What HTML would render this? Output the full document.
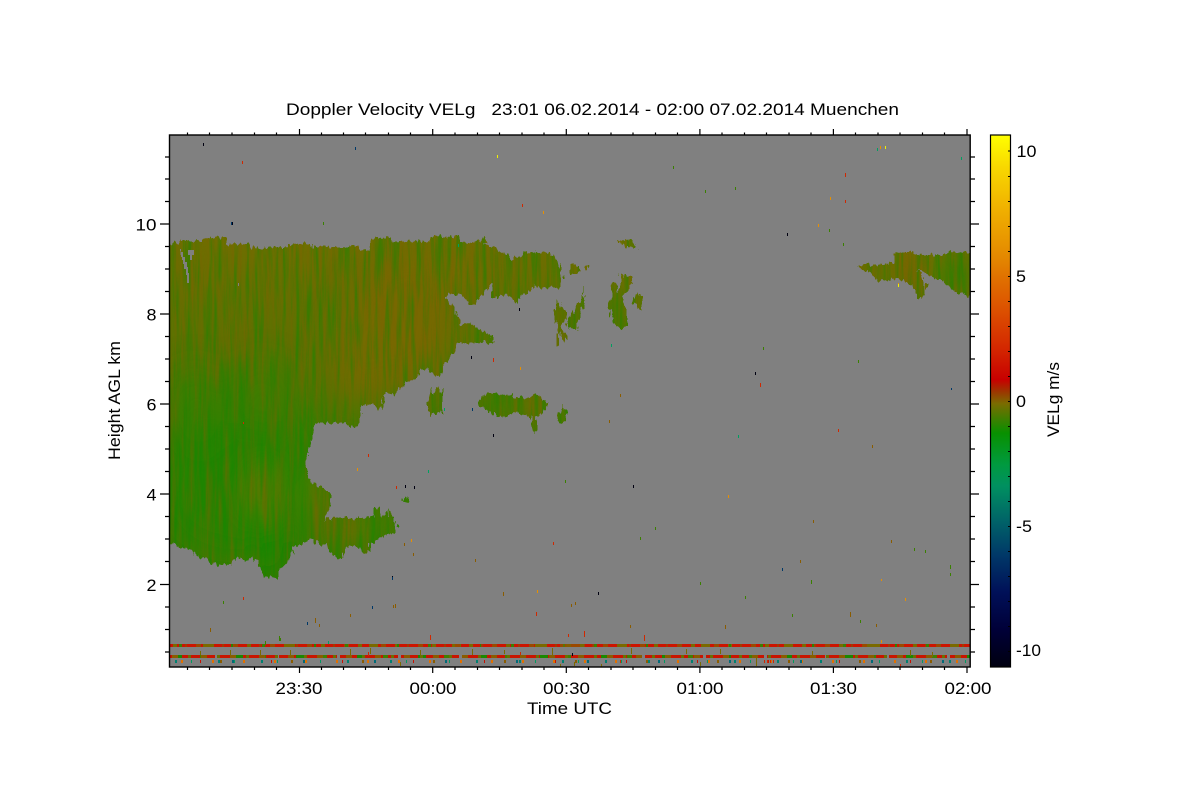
<!DOCTYPE html>
<html><head><meta charset="utf-8"><title>Doppler Velocity</title>
<style>
html,body{margin:0;padding:0;background:#fff;width:1200px;height:800px;overflow:hidden}
svg{display:block}
text{font-family:"Liberation Sans",sans-serif;font-size:17px;fill:#000}
</style></head><body>
<svg width="1200" height="800" viewBox="0 0 1200 800" xmlns="http://www.w3.org/2000/svg">
<defs>
<linearGradient id="base" x1="0" y1="236" x2="0" y2="580" gradientUnits="userSpaceOnUse">
<stop offset="0" stop-color="#706e00"/><stop offset=".2" stop-color="#637000"/><stop offset=".45" stop-color="#557400"/><stop offset=".7" stop-color="#3a7c00"/><stop offset="1" stop-color="#387c00"/>
</linearGradient>
<linearGradient id="cb" x1="0" y1="135" x2="0" y2="667" gradientUnits="userSpaceOnUse">
<stop offset="0" stop-color="#ffff00"/><stop offset=".06" stop-color="#f8d800"/><stop offset=".14" stop-color="#f0b000"/><stop offset=".23" stop-color="#e48800"/><stop offset=".27" stop-color="#e07000"/><stop offset=".33" stop-color="#dc5000"/><stop offset=".4" stop-color="#d42800"/><stop offset=".46" stop-color="#c80000"/><stop offset=".48" stop-color="#a03000"/><stop offset=".505" stop-color="#7a6c00"/><stop offset=".56" stop-color="#089000"/><stop offset=".62" stop-color="#009a40"/><stop offset=".66" stop-color="#009060"/><stop offset=".73" stop-color="#006068"/><stop offset=".79" stop-color="#003868"/><stop offset=".86" stop-color="#001058"/><stop offset=".93" stop-color="#000038"/><stop offset="1" stop-color="#000010"/>
</linearGradient>
<clipPath id="plot"><rect x="170" y="135" width="800" height="532"/></clipPath>
<filter id="jag" filterUnits="userSpaceOnUse" x="150" y="220" width="840" height="380" color-interpolation-filters="sRGB">
<feTurbulence type="fractalNoise" baseFrequency="0.3 0.09" numOctaves="2" seed="7" result="n"/>
<feDisplacementMap in="SourceGraphic" in2="n" scale="9" xChannelSelector="G" yChannelSelector="R" result="d"/>
<feComponentTransfer in="d"><feFuncA type="discrete" tableValues="0 1"/></feComponentTransfer>
</filter>
<mask id="clouds" maskUnits="userSpaceOnUse" x="150" y="220" width="840" height="380">
<g filter="url(#jag)" fill="#fff">
<polygon points="150,244 180,243 180,241 203,241 203,238 225,238 226,244 250,244 250,247 287,247 287,244 313,244 313,247 347,247 354,245 360,250 368,250 372,238 390,238 392,243 393,241 420,241 420,242 429,241 429,236 458,236 458,241 470,243 473,241 489,245 489,247 500,250 510,258 520,257 525,252 535,252 535,253 550,253 552,256 558,262 560,272 563,277 560,288 552,287 540,288 534,284 530,293 520,297 517,305 513,300 508,293 500,297 493,298 492,283 483,293 477,302 470,305 463,295 453,293 445,295 445,297 455,307 458,317 463,325 470,324 477,328 483,332 492,335 493,343 470,343 457,343 453,353 447,360 440,377 432,372 423,368 415,380 405,383 393,395 385,393 382,410 375,406 362,405 360,420 357,427 340,423 327,423 317,423 313,437 308,450 305,467 310,480 323,488 330,495 330,507 323,520 333,518 357,518 367,517 380,518 387,515 387,508 393,515 397,525 393,533 383,535 377,542 370,543 368,553 365,553 360,548 353,548 347,545 340,560 332,555 327,543 322,545 317,544 313,538 300,545 293,547 292,555 287,563 280,570 277,578 265,577 257,563 252,557 247,562 237,557 232,565 218,565 207,560 193,553 180,546 150,535"/>
<polygon points="477,403 483,395 495,393 512,394 513,398 527,398 537,394 542,400 548,403 545,410 537,417 537,428 535,433 532,428 530,417 517,413 500,417 490,412"/>
<polygon points="426,402 430,397 431,387 433,395 437,385 440,393 444,387 444,393 442,397 442,413 433,412 430,415 427,408"/>
<polygon points="557,417 562,410 563,402 564,410 568,408 568,413 565,422 559,423"/>
<polygon points="555,313 557,298 559,307 566,308 565,320 560,327 566,333 566,341 562,338 557,328"/>
<polygon points="567,323 570,313 578,307 583,295 584,285 585,297 583,307 578,320 577,329 568,329"/>
<polygon points="611,282 617,285 618,297 622,273 632,277 630,288 623,297 628,315 627,328 620,328 612,322 610,310 607,308 612,295"/>
<polygon points="633,298 635,293 642,295 642,308 638,310 637,305 633,303"/>
<polygon points="617,238 622,240 628,239 633,243 637,248 627,248 620,242"/>
<polygon points="569,268 573,265 579,267 579,273 570,273"/>
<polygon points="583,268 585,265 590,265 588,270 583,271"/>
<polygon points="857,265 868,265 880,265 893,263 893,253 912,252 918,255 925,255 942,255 952,252 985,252 985,298 963,295 955,293 950,288 945,282 933,277 923,272 918,270 922,277 926,280 926,295 920,299 915,290 909,283 895,278 885,280 878,280 868,270 860,270"/>
<polygon points="480,237 487,238 488,243 480,243"/>
<polygon points="557,333 559,333 559,346 557,346"/>
<polygon points="374,508 381,508 381,520 374,520"/>
<polygon points="403,497 408,497 408,502 403,502"/>
</g>
</mask>
<filter id="blur" x="-30%" y="-30%" width="160%" height="160%"><feGaussianBlur stdDeviation="14"/></filter>
<filter id="brown" x="0" y="0" width="100%" height="100%" color-interpolation-filters="sRGB">
<feTurbulence type="fractalNoise" baseFrequency="0.2 0.013" numOctaves="3" seed="4"/>
<feColorMatrix type="matrix" values="0 0 0 0 .49  0 0 0 0 .39  0 0 0 0 0  2.6 0 0 0 -1.05"/>
</filter>
<filter id="green" x="0" y="0" width="100%" height="100%" color-interpolation-filters="sRGB">
<feTurbulence type="fractalNoise" baseFrequency="0.24 0.014" numOctaves="3" seed="11"/>
<feColorMatrix type="matrix" values="0 0 0 0 .07  0 0 0 0 .53  0 0 0 0 0  2.6 0 0 0 -1.05"/>
</filter>
<pattern id="p1a" width="37" height="3" patternUnits="userSpaceOnUse" x="170" y="644"><rect x="3" width="4" height="3" fill="#7a6a00"/><rect x="15" width="2" height="3" fill="#a03c00"/><rect x="26" width="5" height="3" fill="#9a4a00"/></pattern>
<pattern id="p1b" width="83" height="3" patternUnits="userSpaceOnUse" x="170" y="644"><rect x="9" width="3" height="3" fill="#3c8000"/><rect x="33" width="9" height="3" fill="#7a6a00"/><rect x="61" width="2" height="3" fill="#2c8400"/></pattern>
<pattern id="p2a" width="61" height="3" patternUnits="userSpaceOnUse" x="170" y="655"><rect x="4" width="8" height="3" fill="#1a8800"/><rect x="30" width="5" height="3" fill="#408000"/><rect x="45" width="3" height="3" fill="#808080"/></pattern>
<pattern id="p2b" width="29" height="3" patternUnits="userSpaceOnUse" x="170" y="655"><rect x="2" width="6" height="3" fill="#8a5c00"/><rect x="18" width="3" height="3" fill="#6a7000"/></pattern>
<pattern id="p3a" width="43" height="3" patternUnits="userSpaceOnUse" x="170" y="660"><rect x="5" width="2" height="3" fill="#008070"/><rect x="21" width="1" height="3" fill="#009a60"/></pattern>
<pattern id="p3b" width="31" height="3" patternUnits="userSpaceOnUse" x="170" y="660"><rect x="11" width="2" height="3" fill="#e07000"/></pattern>
<pattern id="p3c" width="71" height="3" patternUnits="userSpaceOnUse" x="170" y="660"><rect x="30" width="1" height="3" fill="#c81000"/><rect x="50" width="2" height="3" fill="#8a5c00"/><rect x="62" width="2" height="3" fill="#006a78"/></pattern>
</defs>

<rect x="169.5" y="135" width="801" height="532" fill="#808080"/>

<g clip-path="url(#plot)">
<g mask="url(#clouds)">
<rect x="150" y="225" width="840" height="370" fill="url(#base)"/>
<g filter="url(#blur)">
<ellipse cx="400" cy="320" rx="50" ry="70" fill="#786800"/>
<ellipse cx="360" cy="350" rx="28" ry="50" fill="#746a00"/>
<ellipse cx="450" cy="270" rx="40" ry="22" fill="#746a00"/>
<ellipse cx="235" cy="485" rx="72" ry="65" fill="#1e8600" opacity=".85"/>
<ellipse cx="195" cy="410" rx="35" ry="45" fill="#2c8200" opacity=".7"/>
<ellipse cx="262" cy="395" rx="32" ry="35" fill="#348000" opacity=".75"/>
<ellipse cx="300" cy="445" rx="20" ry="36" fill="#2a8200"/>
<ellipse cx="262" cy="490" rx="9" ry="26" fill="#7a6600"/>
<ellipse cx="268" cy="548" rx="14" ry="24" fill="#0e8a00"/>
<ellipse cx="325" cy="500" rx="14" ry="22" fill="#6a6e00"/>
<ellipse cx="345" cy="530" rx="20" ry="14" fill="#786800"/>
<ellipse cx="370" cy="532" rx="10" ry="9" fill="#1c8600"/>
<ellipse cx="375" cy="517" rx="10" ry="4" fill="#8a5c00"/>
<ellipse cx="493" cy="404" rx="14" ry="9" fill="#128800"/>
<ellipse cx="530" cy="405" rx="16" ry="12" fill="#6c6e00"/>
<ellipse cx="572" cy="318" rx="6" ry="10" fill="#1a8600"/>
<ellipse cx="955" cy="275" rx="14" ry="20" fill="#268200"/>
<ellipse cx="910" cy="272" rx="9" ry="18" fill="#8a5800"/>
<ellipse cx="870" cy="268" rx="10" ry="6" fill="#7a6600"/>
<ellipse cx="890" cy="272" rx="8" ry="7" fill="#4a7800"/>
</g>
<rect x="169" y="225" width="802" height="370" filter="url(#brown)" opacity=".5"/>
<rect x="169" y="225" width="802" height="370" filter="url(#green)" opacity=".5"/>
</g>
</g>

<!-- small holes in the anvil -->
<path fill="#808080" shape-rendering="crispEdges" d="M180 249h1v3h2v5h2v5h2v5h1v6h1v10h-2v-8h-1v-6h-2v-5h-1v-4h-1v-3h-1zM188 250h6v5h-2v5h-2v-5h-2zM238 283h1v3h-1z"/>

<!-- near-ground bands -->
<g shape-rendering="crispEdges">
<rect x="170" y="644" width="800" height="3" fill="#cc1400"/>
<rect x="170" y="644" width="800" height="3" fill="url(#p1a)"/>
<rect x="170" y="644" width="800" height="3" fill="url(#p1b)"/>
<rect x="400" y="644" width="300" height="3" fill="url(#p1a)"/>
<rect x="560" y="644" width="25" height="3" fill="#7a6c00" opacity=".6"/>
<rect x="170" y="655" width="800" height="3" fill="#c81400"/>
<rect x="170" y="655" width="800" height="3" fill="url(#p2a)"/>
<rect x="170" y="655" width="800" height="3" fill="url(#p2b)"/>
<rect x="170" y="660" width="800" height="3" fill="url(#p3a)"/>
<rect x="170" y="660" width="800" height="3" fill="url(#p3b)"/>
<rect x="170" y="660" width="800" height="3" fill="url(#p3c)"/>
</g>

<!-- speckle -->
<g stroke-width="1" fill="none" shape-rendering="crispEdges">
<path stroke="#000010" d="M203.5 143v3M232.5 222v3M519.5 308v3M471.5 356v3M598.5 592v3M392.5 576v3M755.5 372v3M787.5 233v3M493.5 434v3M633.5 485v3M414.5 486v3M405.5 485v3M572.5 653v3"/>
<path stroke="#003868" d="M355.5 147v3M231.5 222v3M392.5 577v3M372.5 606v3M307.5 622v3M951.5 388v2M782.5 568v3M472.5 408v3"/>
<path stroke="#d02800" d="M242.5 161v3M493.5 358v4M845.5 173v4M845.5 200v3M760.5 383v4M396.5 486v3M243.5 422v2M243.5 597v3M368.5 454v3M838.5 429v3M522.5 204v3M584.5 631v6M644.5 635v6M568.5 634v3M553.5 542v3M536.5 612v4"/>
<path stroke="#e89000" d="M520.5 367v3M543.5 211v3M830.5 197v3M898.5 283v3M411.5 539v3M357.5 468v3M880.5 146v3M537.5 590v3M905.5 598v3M728.5 495v3M818.5 224v3M881.5 579v2M881.5 640v3"/>
<path stroke="#f0f000" d="M497.5 155v3M885.5 146v3M898.5 284v3"/>
<path stroke="#00a060" d="M961.5 157v3M877.5 148v3M428.5 470v3M611.5 344v3M738.5 435v3M444.5 408v3M458.5 244v3M328.5 641v3"/>
<path stroke="#3a8000" d="M705.5 190v3M735.5 187v3M673.5 166v3M323.5 222v3M223.5 601v3M829.5 229v3M843.5 243v3M858.5 360v3M763.5 347v3M565.5 480v3M655.5 527v3M640.5 537v3M745.5 596v3M700.5 582v3M811.5 580v4M792.5 614v3M860.5 620v3M925.5 550v3M914.5 548v3M950.5 565v4M950.5 573v3M279.5 636v5M280.5 638v3M265.5 641v4"/>
<path stroke="#8a5c00" d="M315.5 618v5M319.5 624v3M210.5 628v4M395.5 604v4M350.5 614v3M404.5 543v3M413.5 553v3M475.5 559v3M503.5 592v4M393.5 605v3M575.5 602v3M571.5 604v3M725.5 625v4M850.5 612v5M876.5 624v3M891.5 540v3M872.5 445v3M813.5 520v3M800.5 560v3M620.5 394v3M609.5 420v3M630.5 625v3"/>
<path stroke="#7a6a00" d="M350.5 649v6M370.5 648v6M472.5 649v6M504.5 650v4M552.5 648v8M631.5 648v6M686.5 649v5M720.5 649v5M812.5 651v4M910.5 650v6M756.5 658v8M420.5 650v5M290.5 650v6M260.5 650v6M230.5 650v5M200.5 651v4M932.5 652v5M400.5 662v4M601.5 664v3M560.5 664v3M574.5 662v4M700.5 662v4"/>
<path stroke="#d02800" d="M644.5 636v5M430.5 635v5M520.5 652v3M368.5 652v4M620.5 660v3M770.5 660v3M773.5 660v3M764.5 660v3M767.5 660v3M900.5 664v3"/>
</g>

<!-- frame -->
<rect x="169.5" y="135" width="800.7" height="532" fill="none" stroke="#000" stroke-width="1.4"/>
<g stroke="#000" stroke-width="1.2" fill="none">
<path d="M160 224H169M160 314H169M160 404H169M160 494H169M160 584.5H169M970 224H979M970 314H979M970 404H979M970 494H979M970 584.5H979"/>
<path d="M165 157H169M165 179H169M165 201.5H169M165 246.5H169M165 269H169M165 291.5H169M165 336.5H169M165 359H169M165 381.5H169M165 426.5H169M165 449H169M165 471.5H169M165 516.5H169M165 539H169M165 561.5H169M165 607H169M165 629.5H169M165 652H169"/>
<path d="M970 157H975M970 179H975M970 201.5H975M970 246.5H975M970 269H975M970 291.5H975M970 336.5H975M970 359H975M970 381.5H975M970 426.5H975M970 449H975M970 471.5H975M970 516.5H975M970 539H975M970 561.5H975M970 607H975M970 629.5H975M970 652H975"/>
<path d="M299.5 129V135M432.7 129V135M566.3 129V135M699.9 129V135M833.4 129V135M967 129V135M299.5 667V673M432.7 667V673M566.3 667V673M699.9 667V673M833.4 667V673M967 667V673"/>
<path d="M187.5 132.5V135M209.5 132.5V135M232 132.5V135M254.5 132.5V135M276.5 132.5V135M321.5 132.5V135M343.5 132.5V135M365.5 132.5V135M388.5 132.5V135M410.5 132.5V135M455 132.5V135M477.5 132.5V135M499.5 132.5V135M522 132.5V135M544 132.5V135M588.5 132.5V135M611 132.5V135M633 132.5V135M655.5 132.5V135M677.5 132.5V135M722 132.5V135M744.5 132.5V135M766.5 132.5V135M789 132.5V135M811 132.5V135M855.5 132.5V135M878 132.5V135M900 132.5V135M922.5 132.5V135M944.5 132.5V135"/>
<path d="M187.5 667V670M209.5 667V670M232 667V670M254.5 667V670M276.5 667V670M321.5 667V670M343.5 667V670M365.5 667V670M388.5 667V670M410.5 667V670M455 667V670M477.5 667V670M499.5 667V670M522 667V670M544 667V670M588.5 667V670M611 667V670M633 667V670M655.5 667V670M677.5 667V670M722 667V670M744.5 667V670M766.5 667V670M789 667V670M811 667V670M855.5 667V670M878 667V670M900 667V670M922.5 667V670M944.5 667V670"/>
</g>

<!-- colour bar -->
<rect x="990.5" y="135" width="20" height="532" fill="url(#cb)" stroke="#000" stroke-width="1.2"/>
<path stroke="#000" stroke-width="1" fill="none" d="M1008 151H1010M1008 176.5H1010M1008 201.5H1010M1008 226.5H1010M1008 251.5H1010M1008 276.5H1010M1008 301.5H1010M1008 326.5H1010M1008 351.5H1010M1008 376.5H1010M1008 401.5H1010M1008 426.5H1010M1008 451.5H1010M1008 476.5H1010M1008 501.5H1010M1008 526.5H1010M1008 551.5H1010M1008 576.5H1010M1008 601.5H1010M1008 626.5H1010M1008 651.5H1010"/>

<!-- labels -->
<text x="286" y="115" textLength="613" lengthAdjust="spacingAndGlyphs" xml:space="preserve">Doppler Velocity VELg   23:01 06.02.2014 - 02:00 07.02.2014 Muenchen</text>
<g>
<text x="135.5" y="230.5" textLength="21" lengthAdjust="spacingAndGlyphs">10</text>
<text x="146.5" y="320.5" textLength="10" lengthAdjust="spacingAndGlyphs">8</text>
<text x="146.5" y="410.5" textLength="10" lengthAdjust="spacingAndGlyphs">6</text>
<text x="146.5" y="500.5" textLength="10" lengthAdjust="spacingAndGlyphs">4</text>
<text x="146.5" y="591" textLength="10" lengthAdjust="spacingAndGlyphs">2</text>
<text x="275.5" y="694" textLength="47" lengthAdjust="spacingAndGlyphs">23:30</text>
<text x="409.5" y="694" textLength="47" lengthAdjust="spacingAndGlyphs">00:00</text>
<text x="543" y="694" textLength="47" lengthAdjust="spacingAndGlyphs">00:30</text>
<text x="676.5" y="694" textLength="47" lengthAdjust="spacingAndGlyphs">01:00</text>
<text x="810" y="694" textLength="47" lengthAdjust="spacingAndGlyphs">01:30</text>
<text x="944.5" y="694" textLength="47" lengthAdjust="spacingAndGlyphs">02:00</text>
<text x="527" y="714" textLength="85" lengthAdjust="spacingAndGlyphs">Time UTC</text>
<text x="1016.5" y="157" textLength="20" lengthAdjust="spacingAndGlyphs">10</text>
<text x="1016" y="282" textLength="10" lengthAdjust="spacingAndGlyphs">5</text>
<text x="1016" y="407" textLength="10" lengthAdjust="spacingAndGlyphs">0</text>
<text x="1016" y="532" textLength="16" lengthAdjust="spacingAndGlyphs">-5</text>
<text x="1016" y="656" textLength="25" lengthAdjust="spacingAndGlyphs">-10</text>
<text transform="translate(120 460) rotate(-90)" textLength="119" lengthAdjust="spacingAndGlyphs">Height AGL km</text>
<text transform="translate(1059 437) rotate(-90)" textLength="75" lengthAdjust="spacingAndGlyphs">VELg m/s</text>
</g>
</svg>
</body></html>
